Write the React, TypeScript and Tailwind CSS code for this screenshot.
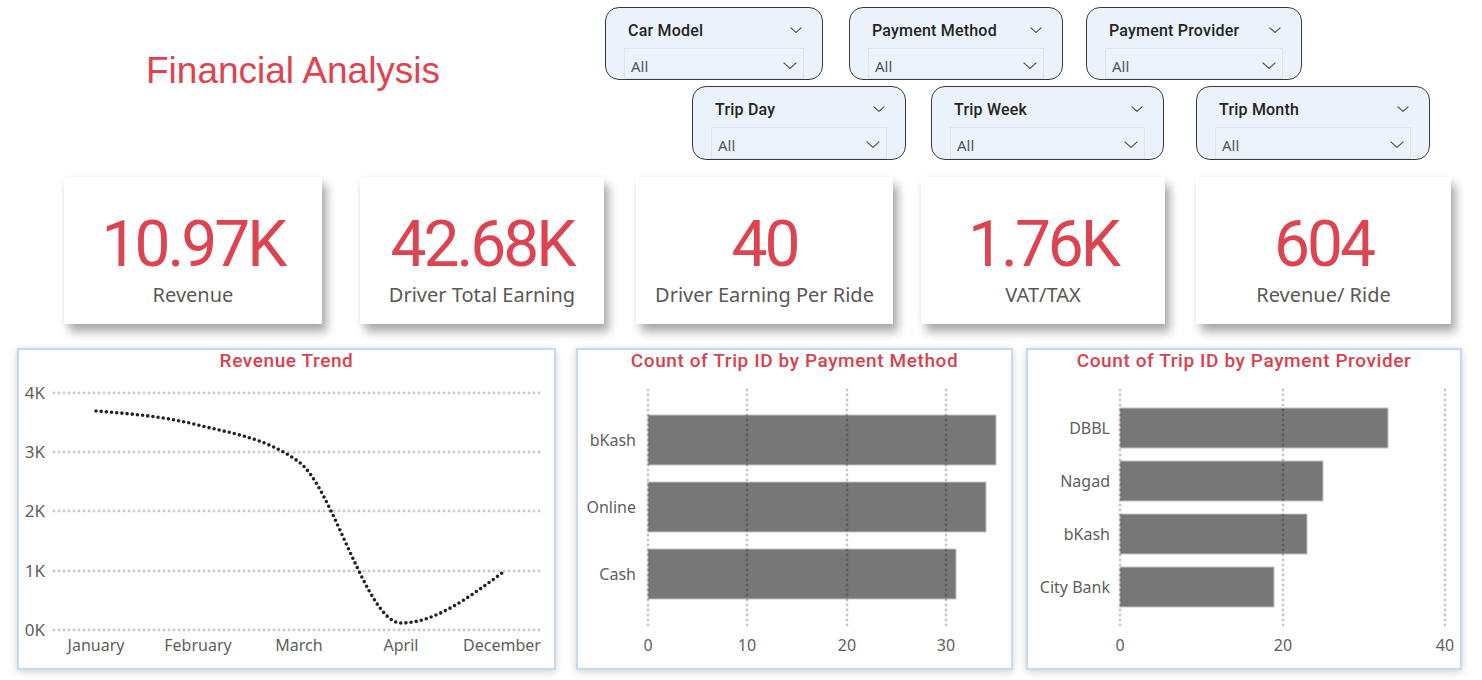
import React from "react";

const Chev = ({ w, h, className }: { w: number; h: number; className?: string }) => (
  <svg width={w} height={h} viewBox={`0 0 ${w} ${h}`} className={className}>
    <path d={`M0.6 0.6 L${w / 2} ${h - 0.6} L${w - 0.6} 0.6`} fill="none" stroke="#4a4a4a" strokeWidth="1.1" />
  </svg>
);

function Slicer({ title, cls }: { title: string; cls: string }) {
  return (
    <div className={`${cls} shrink-0 rounded-[14px] border border-[#3a3a3a] bg-[#eaf2fc] overflow-hidden flex flex-col pt-[13px] px-[18px]`}>
      <div className="h-[27px] shrink-0 flex justify-between pl-[4px] pr-[2px]">
        <span className="text-[16px] leading-[19px] font-medium tracking-[0.2px] text-[#252423] font-['Roboto',sans-serif]">{title}</span>
        <Chev w={12} h={6} className="mt-[6px]" />
      </div>
      <div className="flex-1 border border-[#dde5ee] bg-[#ebf3fd] flex justify-between pl-[6px] pr-[6px]">
        <span className="mt-[9px] text-[15px] leading-[17px] text-[#555] font-['Noto_Sans',sans-serif]">All</span>
        <Chev w={14} h={7} className="mt-[13px]" />
      </div>
    </div>
  );
}

function Card({ value, label, cls }: { value: string; label: string; cls: string }) {
  return (
    <div className={`${cls} shrink-0 h-[147px] bg-white flex flex-col items-center pt-[36px] shadow-[0_0_6px_rgba(0,0,0,0.06),5px_8px_9px_rgba(0,0,0,0.32)]`}>
      <div className="text-[64px] leading-[64px] tracking-[-3px] text-[#db4450] font-['Roboto',sans-serif]">{value}</div>
      <div className="mt-[6px] text-[20px] leading-[24px] text-[#5a5856] font-['Noto_Sans',sans-serif]">{label}</div>
    </div>
  );
}

const GRID = "rgba(0,0,0,0.22)";

function Panel({ title, cls, children }: { title: string; cls: string; children: React.ReactNode }) {
  return (
    <div className={`${cls} shrink-0 h-[322px] bg-white border-2 border-[#c4daf4] flex flex-col shadow-[0_2px_8px_rgba(0,0,0,0.18)]`}>
      <div className="h-[24px] shrink-0 text-center text-[19px] leading-[22px] font-medium tracking-[0.6px] text-[#d9414f] font-['Roboto',sans-serif]">
        {title}
      </div>
      {children}
    </div>
  );
}

function RevenueChart() {
  const ys = [19, 78, 137, 197, 256];
  const yl = ["4K", "3K", "2K", "1K", "0K"];
  const xs = [77, 179, 280, 382, 483];
  const xl = ["January", "February", "March", "April", "December"];
  return (
    <svg width={535} height={294} className="font-['Noto_Sans',sans-serif]">
      {ys.map((y, i) => (
        <g key={i}>
          <line x1={35} x2={521} y1={y} y2={y} stroke="#c8c8c8" strokeWidth={2.8} strokeDasharray="0 5" strokeLinecap="round" />
          <text x={26} y={y + 6} textAnchor="end" fontSize={17} fill="#605e5c">{yl[i]}</text>
        </g>
      ))}
      {xs.map((x, i) => (
        <text key={i} x={x} y={277} textAnchor="middle" fontSize={16} fill="#605e5c">{xl[i]}</text>
      ))}
      <path
        d="M77 37 C111 39.7 145 42.4 179 51 C212.7 59.5 246.3 63.4 280 88 C313.7 112.9 348 249 382 249 C415.7 249 449.3 223.9 483 199"
        fill="none"
        stroke="#232323"
        strokeWidth={3.6}
        strokeDasharray="0 5.2"
        strokeLinecap="round"
      />
    </svg>
  );
}

function BarChart({
  width,
  grid,
  ticks,
  labelX,
  bars,
}: {
  width: number;
  grid: number[];
  ticks: string[];
  labelX: number;
  bars: { label: string; y: number; h: number; w: number }[];
}) {
  return (
    <svg width={width} height={294} className="font-['Noto_Sans',sans-serif]">
      {bars.map((b, i) => (
        <g key={i}>
          <rect x={grid[0]} y={b.y} width={b.w} height={b.h} fill="#777777" stroke="#c4c4c4" strokeWidth={1} />
          <text x={labelX} y={b.y + b.h / 2 + 6} textAnchor="end" fontSize={16} fill="#605e5c">{b.label}</text>
        </g>
      ))}
      {grid.map((x, i) => (
        <g key={i}>
          <line x1={x} x2={x} y1={16} y2={256} stroke={GRID} strokeWidth={2.8} strokeDasharray="0 5" strokeLinecap="round" />
          <text x={x} y={277} textAnchor="middle" fontSize={16} fill="#605e5c">{ticks[i]}</text>
        </g>
      ))}
    </svg>
  );
}

export default function App() {
  return (
    <div className="w-[1482px] h-[680px] bg-white overflow-hidden flex flex-col">
      {/* header */}
      <div className="h-[170px] shrink-0 flex">
        <div className="w-[605px] shrink-0 pl-[146px] pt-[52px]">
          <div className="text-[37px] leading-[37px] text-[#e0434f] font-['Liberation_Sans',Arial,sans-serif]">Financial Analysis</div>
        </div>
        <div className="flex flex-col pt-[7px]">
          <div className="flex h-[73px]">
            <Slicer title="Car Model" cls="w-[218px]" />
            <div className="w-[26px] shrink-0" />
            <Slicer title="Payment Method" cls="w-[214px]" />
            <div className="w-[23px] shrink-0" />
            <Slicer title="Payment Provider" cls="w-[216px]" />
          </div>
          <div className="flex h-[74px] mt-[6px] ml-[87px]">
            <Slicer title="Trip Day" cls="w-[214px]" />
            <div className="w-[25px] shrink-0" />
            <Slicer title="Trip Week" cls="w-[233px]" />
            <div className="w-[32px] shrink-0" />
            <Slicer title="Trip Month" cls="w-[234px]" />
          </div>
        </div>
      </div>

      {/* KPI cards */}
      <div className="flex pt-[7px] pl-[64px]">
        <Card value="10.97K" label="Revenue" cls="w-[258px]" />
        <div className="w-[38px] shrink-0" />
        <Card value="42.68K" label="Driver Total Earning" cls="w-[244px]" />
        <div className="w-[32px] shrink-0" />
        <Card value="40" label="Driver Earning Per Ride" cls="w-[257px]" />
        <div className="w-[28px] shrink-0" />
        <Card value="1.76K" label="VAT/TAX" cls="w-[244px]" />
        <div className="w-[31px] shrink-0" />
        <Card value="604" label="Revenue/ Ride" cls="w-[255px]" />
      </div>

      {/* charts */}
      <div className="flex pt-[24px] pl-[17px]">
        <Panel title="Revenue Trend" cls="w-[539px]">
          <RevenueChart />
        </Panel>
        <div className="w-[20px] shrink-0" />
        <Panel title="Count of Trip ID by Payment Method" cls="w-[437px]">
          <BarChart
            width={433}
            grid={[70, 169, 269, 368]}
            ticks={["0", "10", "20", "30"]}
            labelX={58}
            bars={[
              { label: "bKash", y: 41, h: 50, w: 348 },
              { label: "Online", y: 108, h: 50, w: 338 },
              { label: "Cash", y: 175, h: 50, w: 308 },
            ]}
          />
        </Panel>
        <div className="w-[13px] shrink-0" />
        <Panel title="Count of Trip ID by Payment Provider" cls="w-[436px]">
          <BarChart
            width={432}
            grid={[92, 255, 417]}
            ticks={["0", "20", "40"]}
            labelX={82}
            bars={[
              { label: "DBBL", y: 34, h: 40, w: 268 },
              { label: "Nagad", y: 87, h: 40, w: 203 },
              { label: "bKash", y: 140, h: 40, w: 187 },
              { label: "City Bank", y: 193, h: 40, w: 154 },
            ]}
          />
        </Panel>
      </div>
    </div>
  );
}
